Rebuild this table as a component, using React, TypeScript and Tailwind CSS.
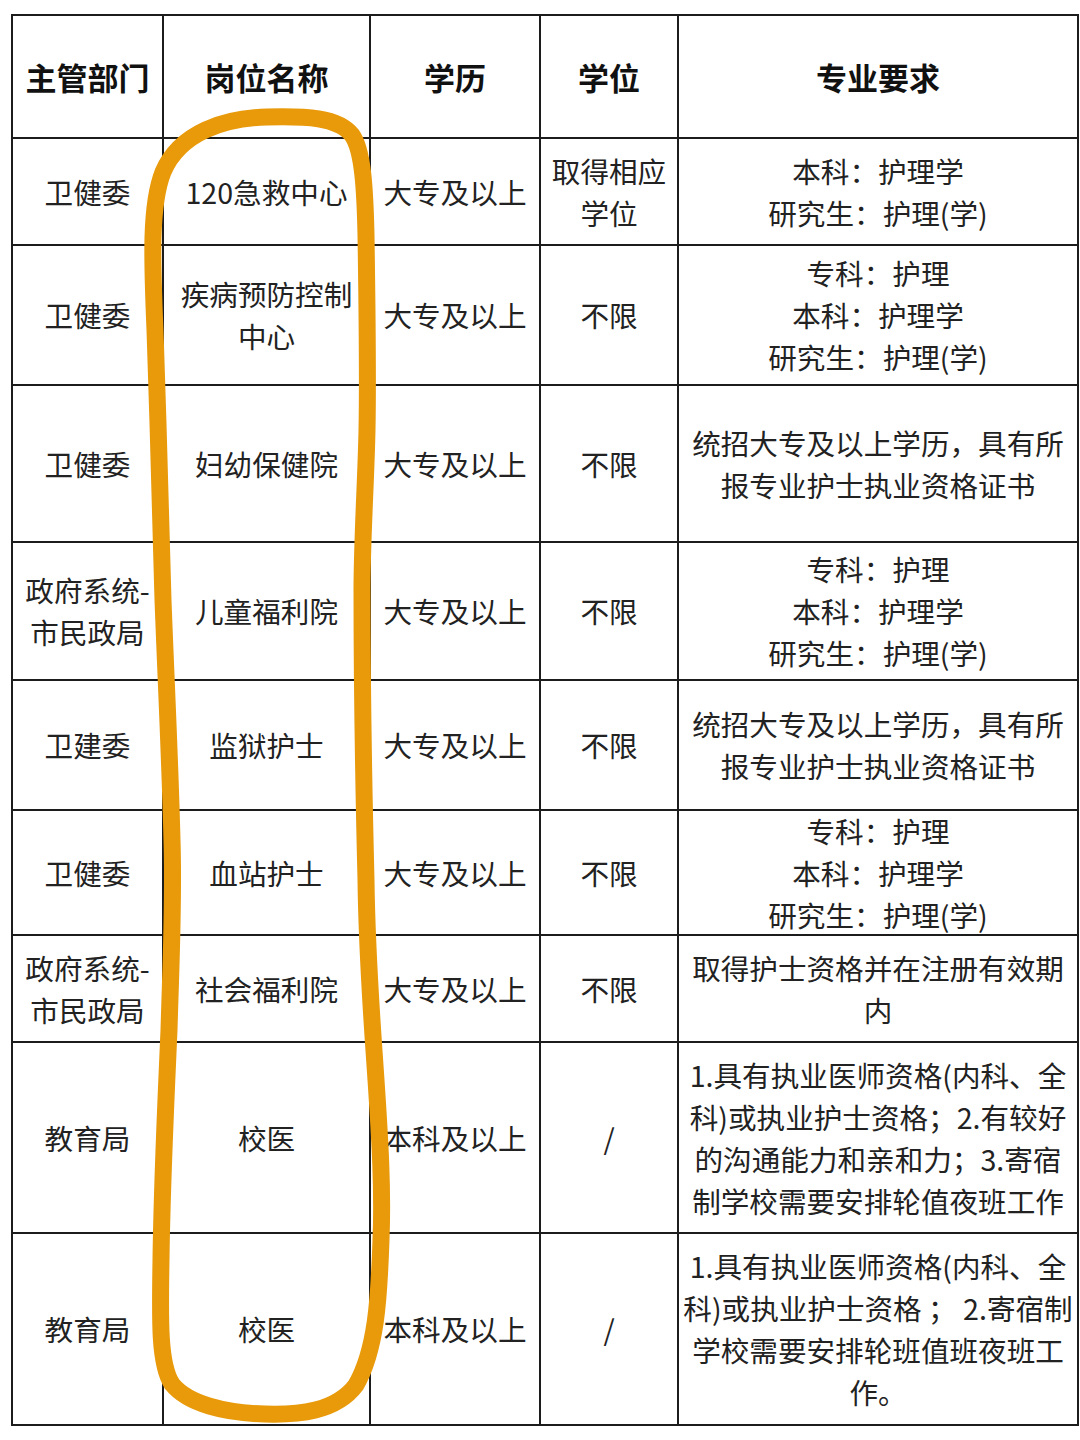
import React from "react";

type Row = {
  dept: string[];
  post: string[];
  edu: string;
  degree: string[];
  major: string[];
  h: string;
};

const HEAD = ["主管部门", "岗位名称", "学历", "学位", "专业要求"];

const NURSE3 = ["专科：护理", "本科：护理学", "研究生：护理(学)"];
const LICENSE = ["统招大专及以上学历，具有所", "报专业护士执业资格证书"];

const ROWS: Row[] = [
  { dept: ["卫健委"], post: ["120急救中心"], edu: "大专及以上", degree: ["取得相应", "学位"], major: ["本科：护理学", "研究生：护理(学)"], h: "h-[107px]" },
  { dept: ["卫健委"], post: ["疾病预防控制", "中心"], edu: "大专及以上", degree: ["不限"], major: NURSE3, h: "h-[140px]" },
  { dept: ["卫健委"], post: ["妇幼保健院"], edu: "大专及以上", degree: ["不限"], major: LICENSE, h: "h-[157px]" },
  { dept: ["政府系统-", "市民政局"], post: ["儿童福利院"], edu: "大专及以上", degree: ["不限"], major: NURSE3, h: "h-[138px]" },
  { dept: ["卫建委"], post: ["监狱护士"], edu: "大专及以上", degree: ["不限"], major: LICENSE, h: "h-[130px]" },
  { dept: ["卫健委"], post: ["血站护士"], edu: "大专及以上", degree: ["不限"], major: NURSE3, h: "h-[125px]" },
  { dept: ["政府系统-", "市民政局"], post: ["社会福利院"], edu: "大专及以上", degree: ["不限"], major: ["取得护士资格并在注册有效期", "内"], h: "h-[107px]" },
  {
    dept: ["教育局"],
    post: ["校医"],
    edu: "本科及以上",
    degree: ["/"],
    major: ["1.具有执业医师资格(内科、全", "科)或执业护士资格；2.有较好", "的沟通能力和亲和力；3.寄宿", "制学校需要安排轮值夜班工作"],
    h: "h-[191px]"
  },
  {
    dept: ["教育局"],
    post: ["校医"],
    edu: "本科及以上",
    degree: ["/"],
    major: ["1.具有执业医师资格(内科、全", "科)或执业护士资格 ； 2.寄宿制", "学校需要安排轮班值班夜班工", "作。"],
    h: "h-[192px]"
  }
];

const Cell = ({ lines, h, bold }: { lines: string[]; h: string; bold?: boolean }) => (
  <div
    className={`${h} border-r-2 border-b-2 border-[#1c1c1c] flex flex-col items-center justify-center text-center overflow-visible`}
  >
    {lines.map((l, i) => (
      <div
        key={i}
        className={
          bold
            ? "whitespace-nowrap text-[31px] leading-[42px] font-bold text-[#111]"
            : "whitespace-nowrap text-[28.6px] leading-[42px] text-[#222]"
        }
      >
        {l}
      </div>
    ))}
  </div>
);

const App = () => {
  return (
    <div
      className="relative w-[1080px] h-[1440px] bg-white overflow-hidden"
      style={{ fontFamily: '"Noto Sans CJK SC", "Noto Sans", sans-serif' }}
    >
      <div className="pl-[11px] pt-[14px]">
        <div className="grid grid-cols-[151px_207px_170px_138px_400px] w-fit border-l-2 border-t-2 border-[#1c1c1c]">
          {HEAD.map((t) => (
            <Cell key={t} lines={[t]} h="h-[123px]" bold />
          ))}
          {ROWS.map((r, i) => (
            <React.Fragment key={i}>
              <Cell lines={r.dept} h={r.h} />
              <Cell lines={r.post} h={r.h} />
              <Cell lines={[r.edu]} h={r.h} />
              <Cell lines={r.degree} h={r.h} />
              <Cell lines={r.major} h={r.h} />
            </React.Fragment>
          ))}
        </div>
      </div>

      {/* hand-drawn highlight around the 岗位名称 column */}
      <svg className="absolute left-0 top-0 pointer-events-none" width="1080" height="1440" viewBox="0 0 1080 1440">
        <path
          d="M 267 117 C 305 116 338 117 352 135 C 363 150 365 190 366 235 C 367 300 368 380 367 430 C 366 480 362 540 362 590 C 362 700 364 800 366 880 C 367 960 372 1020 376 1080 C 380 1140 383 1190 381 1240 C 379 1300 376 1350 356 1385 C 336 1412 298 1415 265 1414 C 225 1413 188 1404 172 1384 C 159 1364 160 1320 161 1260 C 162 1180 166 1100 169 1030 C 171 960 174 900 172 840 C 170 760 166 680 163 600 C 161 520 158 420 155 330 C 152 260 150 205 163 172 C 180 132 225 118 267 117 Z"
          fill="none"
          stroke="#E89A0B"
          strokeWidth="17"
          strokeLinejoin="round"
          strokeLinecap="round"
        />
      </svg>
    </div>
  );
};

export default App;
